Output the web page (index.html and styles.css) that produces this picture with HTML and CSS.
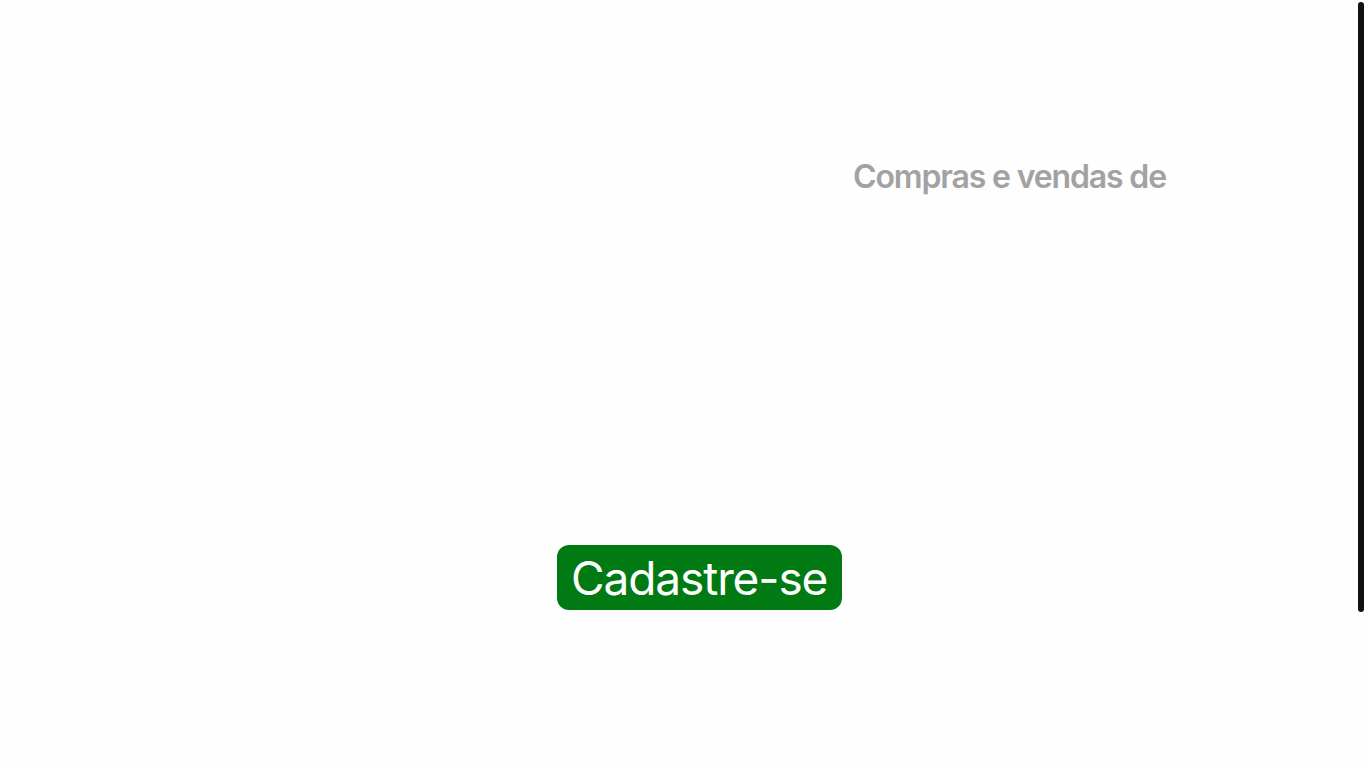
FILE: index.html
```html
<!DOCTYPE html>
<html lang="pt-BR">
<head>
<meta charset="utf-8">
<title>Cadastre-se</title>
<link rel="stylesheet" href="styles.css">
</head>
<body>
<main class="page">
  <section class="hero">
    <div class="hero-left"></div>
    <div class="hero-right">
      <h2 class="tagline">Compras e vendas de</h2>
    </div>
  </section>
  <section class="cta">
    <a class="btn-signup" href="#">Cadastre-se</a>
  </section>
</main>
<div class="scroll-thumb"></div>
</body>
</html>
```
FILE: styles.css
```css
html, body {
  margin: 0;
  padding: 0;
  background: #fefefe;
}
body {
  font-family: Inter, "Open Sans", "Liberation Sans", sans-serif;
  overflow: hidden;
}
.page {
  width: 1366px;
  height: 768px;
  display: flex;
  flex-direction: column;
}
.hero {
  display: grid;
  grid-template-columns: 853px 1fr;
  padding-top: 157px;
  height: 389px;
  box-sizing: border-box;
}
.tagline {
  margin: 0;
  font-size: 32px;
  font-weight: 600;
  color: #a2a2a2;
  letter-spacing: -1.15px;
  line-height: 40px;
}
.cta {
  display: flex;
  padding-left: 557px;
  padding-top: 156px;
}
.btn-signup {
  display: inline-block;
  background: #027a13;
  color: #ffffff;
  text-decoration: none;
  font-size: 46px;
  font-weight: 400;
  letter-spacing: -1.1px;
  line-height: 66px;
  height: 65px;
  padding: 0 15px 0 14px;
  border-radius: 12px;
}
.scroll-thumb {
  position: fixed;
  right: 2px;
  top: 2px;
  width: 6px;
  height: 610px;
  background: #111111;
  border-radius: 3px;
}
```
